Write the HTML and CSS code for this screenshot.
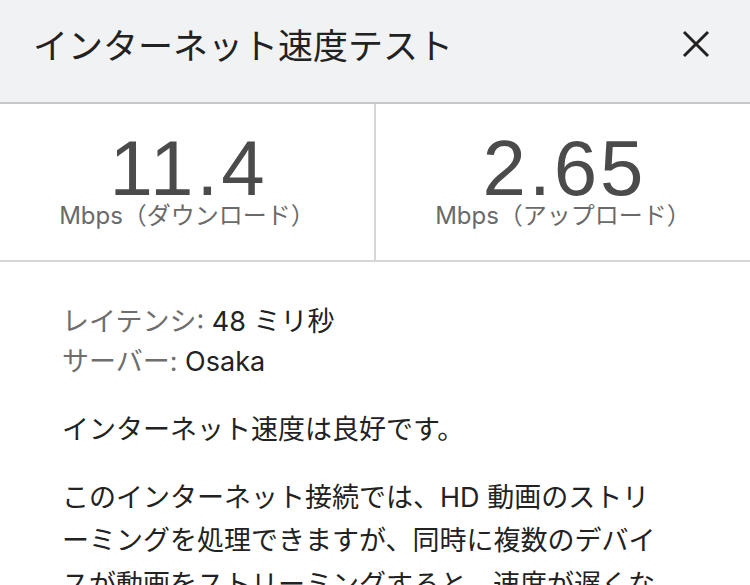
FILE: index.html
```html
<!DOCTYPE html>
<html lang="ja">
<head>
    <meta charset="UTF-8">
    <meta name="viewport" content="width=device-width, initial-scale=1.0">
    <title>インターネット速度テスト</title>
    <link rel="stylesheet" href="styles.css">
</head>
<body>
    <div class="header">
        <h1 class="title">インターネット速度テスト</h1>
        <button class="close" aria-label="閉じる">
            <svg width="28" height="28" viewBox="0 0 28 28">
                <path d="M2 2 L26 26 M26 2 L2 26" stroke="#222" stroke-width="3" fill="none"/>
            </svg>
        </button>
    </div>
    <div class="stats">
        <div class="stat">
            <div class="stat-value">11.4</div>
            <div class="stat-label">Mbps（ダウンロード）</div>
        </div>
        <div class="stat">
            <div class="stat-value">2.65</div>
            <div class="stat-label">Mbps（アップロード）</div>
        </div>
    </div>
    <div class="details">
        <div class="info">
            <div class="info-row"><span class="info-label">レイテンシ:</span> 48 ミリ秒</div>
            <div class="info-row"><span class="info-label">サーバー:</span> Osaka</div>
        </div>
        <p>インターネット速度は良好です。</p>
        <p>このインターネット接続では、HD 動画のストリーミングを処理できますが、同時に複数のデバイスが動画をストリーミングすると、速度が遅くなる場合があります。</p>
    </div>
</body>
</html>
```

FILE: styles.css
```css
body {
    font-family: Inter, "Noto Sans CJK JP", sans-serif;
    margin: 0;
    background: #fff;
    color: #222;
}
.header {
    display: flex;
    align-items: center;
    justify-content: space-between;
    height: 104px;
    padding: 0 40px 15px 33px;
    box-sizing: border-box;
    background: #f1f2f4;
    border-bottom: 2px solid #c6c7c9;
}
.title {
    margin: 0;
    font-size: 35px;
    font-weight: normal;
    color: #222;
}
.close {
    background: none;
    border: none;
    padding: 0;
    width: 28px;
    height: 28px;
    display: flex;
}
.stats {
    display: flex;
    height: 158px;
    border-bottom: 2px solid #d6d6d6;
    box-sizing: border-box;
}
.stat {
    flex: 1;
    text-align: center;
    padding-top: 29px;
}
.stat + .stat {
    border-left: 2px solid #d6d6d6;
}
.stat-value {
    font-family: "Liberation Sans", sans-serif;
    font-size: 78px;
    line-height: 70px;
    letter-spacing: 3px;
    padding-left: 3px;
    color: #4b4b4b;
}
.stat-label {
    font-size: 24px;
    line-height: 26px;
    color: #6a6a6a;
}
.details {
    padding: 40px 76px 0 62px;
    font-size: 27px;
}
.info {
    margin-bottom: 26px;
}
.info-row {
    line-height: 40px;
}
.info-label {
    color: #6e6e6e;
}
.details p {
    margin: 0 0 24px;
    line-height: 43.5px;
}
```
